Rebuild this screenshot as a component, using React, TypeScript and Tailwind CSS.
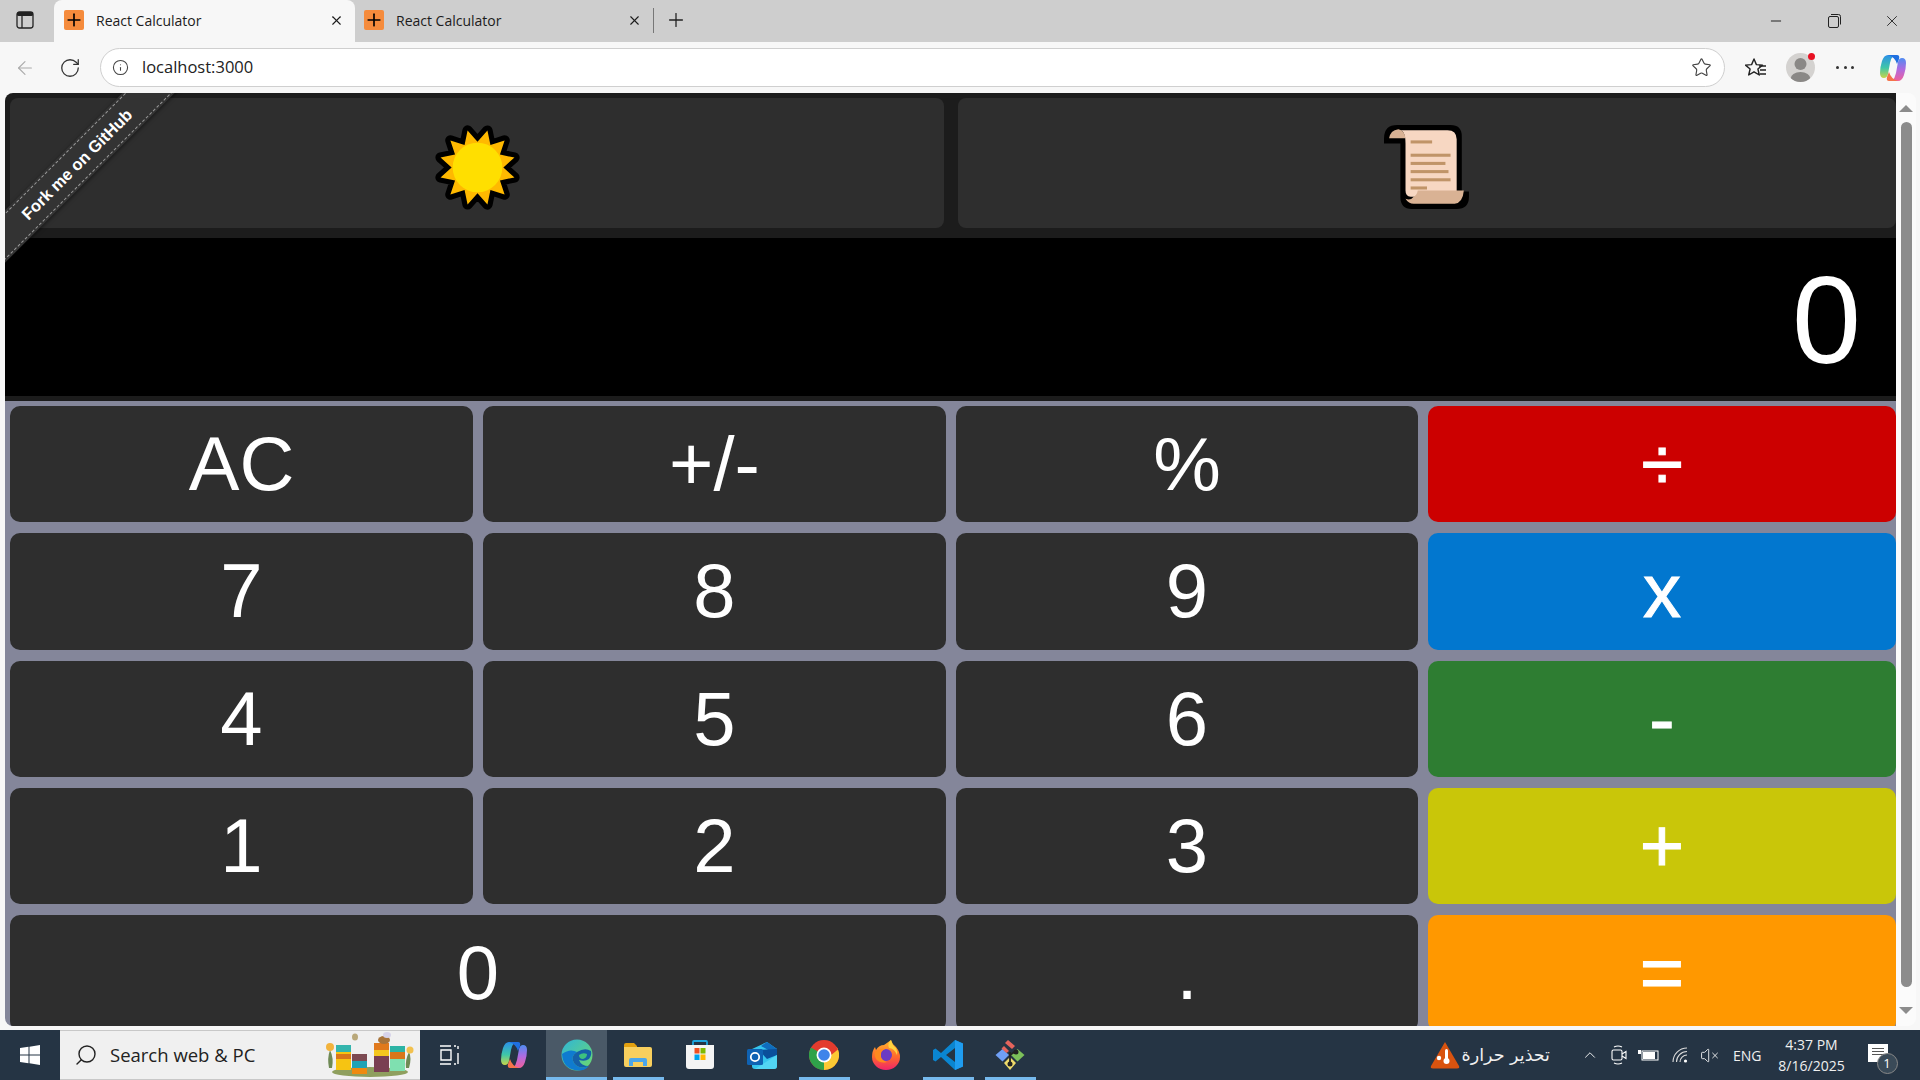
import React from 'react';
import { X, Plus, ArrowLeft, RotateCw, Info, Star, Minus, ChevronUp, VolumeX, Search } from 'lucide-react';

const sunPoints = (() => {
  const pts: string[] = [];
  for (let i = 0; i < 24; i++) {
    const a = ((i * 15 - 75) * Math.PI) / 180;
    const r = i % 2 === 0 ? 37 : 25;
    pts.push(`${(43 + r * Math.cos(a)).toFixed(1)},${(43 + r * Math.sin(a)).toFixed(1)}`);
  }
  return pts.join(' ');
})();

const SunIcon = () => (
  <svg width="89" height="89" viewBox="0 0 86 86">
    <polygon points={sunPoints} fill="#ffb900" stroke="#000" strokeWidth="10" strokeLinejoin="round" />
    <polygon points={sunPoints} fill="#ffb900" />
    <circle cx="43" cy="43" r="24" fill="#ffdf00" />
  </svg>
);

const ScrollIcon = () => (
  <svg width="88" height="88" viewBox="0 0 86 86">
    <path
      d="M14 2 H66 Q77 2 77 13 V67 H84 V72 Q84 84 72 84 H28 Q17 84 17 72 V20 H1 V15 Q1 2 14 2 Z"
      fill="#000"
    />
    <path d="M16 7 H63 Q72 7 72 16 V72 H27 Q22 72 22 66 V20 Q22 7 16 7 Z" fill="#f7d7c2" />
    <path d="M6 15 Q7 7 15 6 Q21 7 22 15 Z" fill="#d9b294" />
    <path d="M30 72 Q33 71 34 66 H79 Q78 78 70 79 H30 Q25 79 22 74 Q27 76 30 72 Z" fill="#d9b294" />
    <rect x="27" y="17" width="21" height="3" fill="#c09468" />
    <rect x="27" y="30" width="39" height="3" fill="#c09468" />
    <rect x="27" y="38" width="34" height="3" fill="#c09468" />
    <rect x="27" y="46" width="37" height="3" fill="#c09468" />
    <rect x="27" y="54" width="39" height="3" fill="#c09468" />
    <rect x="27" y="62" width="16" height="3" fill="#c09468" />
  </svg>
);

const Favicon = () => (
  <div className="w-5 h-5 rounded-[2px] bg-[#f58b3c] flex items-center justify-center shrink-0">
    <Plus className="w-5 h-5 text-black" strokeWidth={2} />
  </div>
);

const Tab = ({ active }: { active?: boolean }) => (
  <div
    className={`h-[42px] flex items-center pl-[10px] pr-[11px] pb-[2px] shrink-0 ${
      active ? 'w-[301px] bg-[#f7f7f7] rounded-t-[8px]' : 'w-[299px] ml-[-1px]'
    }`}
  >
    <Favicon />
    <span className="ml-3 text-[14px] text-[#1c1c1c] flex-1">React Calculator</span>
    <X className="w-[15px] h-[15px] text-[#1c1c1c]" strokeWidth={1.8} />
  </div>
);

const CopilotIcon = ({ size }: { size: number }) => (
  <svg width={size} height={size} viewBox="0 0 28 28">
    <defs>
      <linearGradient id={`cpa${size}`} x1="0" y1="0" x2="0" y2="1">
        <stop offset="0" stopColor="#2b8fe8" />
        <stop offset="0.55" stopColor="#3ec6a8" />
        <stop offset="1" stopColor="#c8d64a" />
      </linearGradient>
      <linearGradient id={`cpb${size}`} x1="0" y1="0" x2="0" y2="1">
        <stop offset="0" stopColor="#4f8cf2" />
        <stop offset="0.5" stopColor="#b06ae0" />
        <stop offset="1" stopColor="#f0609a" />
      </linearGradient>
    </defs>
    <path d="M9 1 H15 Q12 4 11 9 L9 20 Q8 24 5 24 Q1 24 1 19 Q1 13 3 7 Q5 1 9 1 Z" fill={`url(#cpa${size})`} />
    <path d="M19 27 H13 Q16 24 17 19 L19 8 Q20 4 23 4 Q27 4 27 9 Q27 15 25 21 Q23 27 19 27 Z" fill={`url(#cpb${size})`} />
    <path d="M9 1 H18 Q21 1 20 5 L18 10 Q16 3 9 1 Z" fill="#1f6fe0" />
    <path d="M19 27 H10 Q7 27 8 23 L10 18 Q12 25 19 27 Z" fill="#f5734a" />
  </svg>
);

const TitleBar = () => (
  <div className="h-[42px] bg-[#cecece] flex items-center shrink-0">
    <div className="w-[54px] pl-[16px] pb-[2px]">
      <svg width="18" height="18" viewBox="0 0 18 18">
        <rect x="1" y="1" width="16" height="16" rx="2.5" fill="none" stroke="#222" strokeWidth="1.3" />
        <rect x="1" y="1" width="16" height="4" rx="1.5" fill="#222" />
        <line x1="6" y1="5" x2="6" y2="17" stroke="#222" strokeWidth="1.3" />
      </svg>
    </div>
    <Tab active />
    <Tab />
    <div className="w-px h-[25px] bg-[#777] mb-[2px]" />
    <Plus className="w-[22px] h-[22px] ml-[11px] mb-[2px] text-[#222]" strokeWidth={1.4} />
    <div className="flex-1" />
    <Minus className="w-[16px] h-[16px] text-[#222] mr-[44px]" strokeWidth={1.5} />
    <svg width="13" height="14" viewBox="0 0 13 14" className="mr-[42px]">
      <rect x="0.5" y="2.5" width="10" height="11" rx="1.5" fill="none" stroke="#222" />
      <path d="M3 0.5 H10.5 Q12.5 0.5 12.5 2.5 V10.5" fill="none" stroke="#222" />
    </svg>
    <X className="w-[18px] h-[18px] text-[#222] mr-[19px]" strokeWidth={1.2} />
  </div>
);

const Toolbar = () => (
  <div className="h-[51px] bg-[#f7f7f7] flex items-center shrink-0">
    <ArrowLeft className="w-[22px] h-[22px] ml-[14px] text-[#aaa]" strokeWidth={1.2} />
    <RotateCw className="w-[22px] h-[22px] ml-[23px] text-[#333]" strokeWidth={1.4} />
    <div className="ml-[19px] w-[1625px] h-[39px] bg-white border border-[#cfcfcf] rounded-full flex items-center pl-[11px] pr-[12px]">
      <Info className="w-[17px] h-[17px] text-[#444]" strokeWidth={1.5} />
      <span className="ml-[13px] text-[16.5px] text-[#222] flex-1">localhost:3000</span>
      <Star className="w-[21px] h-[21px] text-[#444]" strokeWidth={1.3} />
    </div>
    <svg width="22" height="22" viewBox="0 0 22 22" className="ml-[20px]">
      <path d="M9 2 L11.4 7.6 L17.5 8.1 L12.9 12 L14.3 18 L9 14.8 L3.7 18 L5.1 12 L.5 8.1 L6.6 7.6 Z" fill="none" stroke="#222" strokeWidth="1.4" strokeLinejoin="round" />
      <path d="M14 9 H21 M15 13 H21 M15 17 H21" stroke="#222" strokeWidth="1.3" />
    </svg>
    <div className="relative ml-[19px] w-[29px] h-[29px] rounded-full bg-[#d4d2d0] overflow-visible">
      <svg width="29" height="29" viewBox="0 0 29 29" className="rounded-full">
        <circle cx="14.5" cy="11" r="6" fill="#8a8886" />
        <ellipse cx="14.5" cy="26" rx="10" ry="7" fill="#8a8886" />
      </svg>
      <div className="absolute top-0 right-0 w-[7px] h-[7px] rounded-full bg-[#e81123]" />
    </div>
    <span className="ml-[21px] w-[18px] flex justify-between">
      <i className="w-[3px] h-[3px] rounded-full bg-[#333]" />
      <i className="w-[3px] h-[3px] rounded-full bg-[#333]" />
      <i className="w-[3px] h-[3px] rounded-full bg-[#333]" />
    </span>
    <div className="ml-[25px]">
      <CopilotIcon size={28} />
    </div>
  </div>
);

const Key = ({
  label,
  color = 'bg-[#2e2e2e]',
  span,
  op,
}: {
  label: string;
  color?: string;
  span?: boolean;
  op?: boolean;
}) => (
  <div
    className={`${color} ${span ? 'col-span-2' : ''} ${
      op ? '[-webkit-text-stroke:1px_#fff]' : ''
    } rounded-[10px] flex items-center justify-center text-white text-[76px] leading-none`}
  >
    {label}
  </div>
);

const Calculator = () => (
  <div className="flex-1 min-w-0 flex flex-col font-['Liberation_Sans',Arial,sans-serif]">
    <div className="h-[145px] bg-[#1c1c1c] flex gap-[14px] pl-[5px] pt-[5px] pb-[10px] shrink-0">
      <div className="w-[934px] rounded-[8px] bg-[#2e2e2e] flex items-center justify-center pt-2">
        <SunIcon />
      </div>
      <div className="flex-1 rounded-[8px] bg-[#2e2e2e] flex items-center justify-center pt-2">
        <ScrollIcon />
      </div>
    </div>
    <div className="h-[163px] bg-black border-b-[5px] border-[#1c1c1c] flex items-center justify-end pr-[35px] pt-[6px] shrink-0 text-white text-[124px] leading-none">
      0
    </div>
    <div className="flex-1 bg-[#84869a] pl-[5px] pt-[5px] overflow-hidden">
      <div className="grid grid-cols-[463px_463px_462px_468px] grid-rows-[116.25px_116.25px_116.25px_116.25px_116.25px] gap-x-[10px] gap-y-[11px]">
        <Key label="AC" />
        <Key label="+/-" />
        <Key label="%" />
        <Key label="÷" color="bg-[#cc0000]" op />
        <Key label="7" />
        <Key label="8" />
        <Key label="9" />
        <Key label="x" color="bg-[#0277cf]" op />
        <Key label="4" />
        <Key label="5" />
        <Key label="6" />
        <Key label="-" color="bg-[#2e7d32]" op />
        <Key label="1" />
        <Key label="2" />
        <Key label="3" />
        <Key label="+" color="bg-[#c9c609]" op />
        <Key label="0" span />
        <Key label="." />
        <Key label="=" color="bg-[#ff9800]" op />
      </div>
    </div>
  </div>
);

const Scrollbar = () => (
  <div className="w-[20px] bg-[#fbfbfb] flex flex-col items-center shrink-0 pt-[12px] pb-[12px]">
    <div className="w-0 h-0 border-x-[7px] border-x-transparent border-b-[7px] border-b-[#8c8c8c]" />
    <div className="w-[11px] h-[865px] mt-[10px] rounded-full bg-[#8c8c8c]" />
    <div className="flex-1" />
    <div className="w-0 h-0 border-x-[7px] border-x-transparent border-t-[7px] border-t-[#8c8c8c]" />
  </div>
);

const WindowsLogo = () => (
  <svg width="20" height="20" viewBox="0 0 20 20">
    <path d="M0 3 L8.5 1.8 V9.5 H0 Z M9.5 1.7 L20 0 V9.5 H9.5 Z M0 10.5 H8.5 V18.2 L0 17 Z M9.5 10.5 H20 V20 L9.5 18.3 Z" fill="#fff" />
  </svg>
);

const HiveArt = () => (
  <svg width="92" height="46" viewBox="0 0 92 46">
    <ellipse cx="46" cy="40" rx="38" ry="5" fill="#8f9f5e" />
    <path d="M5 36 Q3 26 6 18 Q10 26 8 36 Z M85 36 Q88 26 85 20 Q81 28 82 36 Z" fill="#6f8a55" />
    <circle cx="6" cy="15" r="4" fill="#f2b33c" />
    <circle cx="86" cy="18" r="3.5" fill="#f2c14e" />
    <rect x="12" y="13" width="15" height="25" fill="#f6c412" />
    <rect x="12" y="13" width="15" height="7" fill="#34b5ad" />
    <rect x="12" y="22" width="15" height="5" fill="#d9761a" />
    <rect x="28" y="22" width="15" height="7" fill="#7c4a52" />
    <rect x="28" y="29" width="15" height="7" fill="#1fa3b5" />
    <rect x="28" y="36" width="15" height="6" fill="#ef8a10" />
    <rect x="50" y="11" width="15" height="7" fill="#e0791c" />
    <rect x="50" y="18" width="15" height="6" fill="#f4c61f" />
    <rect x="50" y="24" width="15" height="16" fill="#7a3f52" />
    <rect x="66" y="14" width="15" height="6" fill="#2cb3a4" />
    <rect x="66" y="20" width="15" height="7" fill="#d9761a" />
    <rect x="66" y="27" width="15" height="12" fill="#7fe0b0" />
    <ellipse cx="60" cy="8" rx="6" ry="4" fill="#a8743a" />
    <ellipse cx="63" cy="3" rx="4" ry="3" fill="#d7d3ea" />
    <ellipse cx="31" cy="5" rx="3" ry="3.5" fill="#b9a87a" />
  </svg>
);

const EdgeIcon = () => (
  <svg width="32" height="32" viewBox="0 0 32 32">
    <defs>
      <linearGradient id="edgeTop" x1="0" y1="0" x2="1" y2="1">
        <stop offset="0" stopColor="#2fb5d8" />
        <stop offset="1" stopColor="#6fdb6a" />
      </linearGradient>
    </defs>
    <circle cx="16" cy="16" r="15.5" fill="url(#edgeTop)" />
    <path d="M1 15 Q2 31 18 31.5 Q24 31.5 28 27 Q18 31 13 24 Q9 17 16 13 Q9 9 1 15 Z" fill="#0f7bd0" />
    <path d="M16 13 Q9 17 13 24 Q18 31 28 27 Q20 27 18 21 Q24 23 28 20 Q31 16 30 12 Q24 8 16 13 Z" fill="#1560a8" />
    <path d="M18 16 Q22 13 26 15 Q26 19 22 20 Q18 20 18 16 Z" fill="#3dc27f" />
  </svg>
);

const FolderIcon = () => (
  <svg width="28" height="24" viewBox="0 0 28 24">
    <path d="M0 2 Q0 0 2 0 H10 L13 3 H13 V6 H0 Z" fill="#e3a00f" />
    <path d="M0 4 H26 Q28 4 28 6 V22 Q28 24 26 24 H2 Q0 24 0 22 Z" fill="#f8cf5e" />
    <path d="M5 23 V17 Q5 15 7 15 H21 Q23 15 23 17 V23 H19 V19 H9 V23 Z" fill="#4ba6ea" />
  </svg>
);

const StoreIcon = () => (
  <svg width="30" height="30" viewBox="0 0 30 30">
    <path d="M8 6 V2 Q8 1 9 1 H21 Q22 1 22 2 V6" fill="none" stroke="#1ea6df" strokeWidth="1.8" />
    <path d="M1 5 H29 V26 Q29 29 26 29 H4 Q1 29 1 26 Z" fill="#f4f4f4" />
    <rect x="9.5" y="8" width="5" height="5.5" fill="#f25022" />
    <rect x="15.5" y="8" width="5" height="5.5" fill="#7fba00" />
    <rect x="9.5" y="14.5" width="5" height="5.5" fill="#00a4ef" />
    <rect x="15.5" y="14.5" width="5" height="5.5" fill="#ffb900" />
  </svg>
);

const OutlookIcon = () => (
  <svg width="30" height="27" viewBox="0 0 30 27">
    <path d="M5 7 L20 0 L30 7 V24 Q30 27 27 27 H8 Q5 27 5 24 Z" fill="#35c5ee" />
    <path d="M14 4 L20 0 L30 7 V13 Z" fill="#0f6cbd" />
    <path d="M12 8 L30 7 V13 L20 17 Z" fill="#0a4f9b" />
    <path d="M8 27 L30 13 V24 Q30 27 27 27 Z" fill="#5fdcf7" opacity="0.7" />
    <rect x="0" y="7" width="16" height="16" rx="1.5" fill="#0f62b3" />
    <circle cx="8" cy="15" r="4.2" fill="none" stroke="#fff" strokeWidth="1.8" />
  </svg>
);

const ChromeIcon = () => (
  <svg width="30" height="30" viewBox="0 0 30 30">
    <circle cx="15" cy="15" r="15" fill="#e33b2e" />
    <path d="M15 15 L2 7.5 A15 15 0 0 0 15 30 Z" fill="#2fa24a" />
    <path d="M15 15 L15 30 A15 15 0 0 0 28 7.5 Z" fill="#fcc934" />
    <path d="M15 7.5 H28 A15 15 0 0 1 28.9 9.5 L21 16 Z" fill="#e33b2e" />
    <circle cx="15" cy="15" r="7.5" fill="#fff" />
    <circle cx="15" cy="15" r="5.8" fill="#3f84ea" />
  </svg>
);

const FirefoxIcon = () => (
  <svg width="28" height="30" viewBox="0 0 28 30">
    <defs>
      <linearGradient id="foxBody" x1="0.5" y1="0" x2="0.5" y2="1">
        <stop offset="0" stopColor="#ffb62e" />
        <stop offset="0.55" stopColor="#ff6a2b" />
        <stop offset="1" stopColor="#f0246b" />
      </linearGradient>
    </defs>
    <path d="M19 0 Q20 4 24 7 Q28 12 28 17 A14 13 0 0 1 0 17 Q0 11 3 7 L4 10 Q7 5 12 5 Q15 3 19 0 Z" fill="url(#foxBody)" />
    <circle cx="14" cy="15" r="6" fill="#6c3bc2" />
    <path d="M3 12 Q8 8 13 9 Q9 11 9 14 Q8 20 15 22 Q8 24 4 19 Q2 16 3 12 Z" fill="#ff8a1e" />
    <path d="M19 0 Q20 5 24 8 Q26 12 25 15 Q22 8 17 8 Q15 4 19 0 Z" fill="#ffd23f" />
  </svg>
);

const VsCodeIcon = () => (
  <svg width="30" height="30" viewBox="0 0 30 30">
    <path d="M22 0 L30 3.5 V26.5 L22 30 L8 17 L2.5 21.5 L0 20 V10 L2.5 8.5 L8 13 Z M22 8 L13 15 L22 22 Z" fill="#0a85d1" />
    <path d="M22 0 L30 3.5 V26.5 L22 30 Z" fill="#1f9cf0" />
  </svg>
);

const GitIcon = () => (
  <svg width="30" height="30" viewBox="0 0 30 30">
    <path d="M7.5 9 L14 15 L7.5 21.5 L0.5 15 Z" fill="#6f9ff5" />
    <path d="M22.5 9 L29.5 15 L22.5 21.5 L16 15 Z" fill="#7cc05a" />
    <path d="M15 17 L21 23 L15 30 L9 23 Z" fill="#f0dc6b" />
    <path d="M13 0 L20 6 L17 9 L10 3 Z" fill="#e5645c" />
    <path d="M9 6 L14 11 L11.5 13 L6.5 8.5 Z" fill="#e5645c" />
    <path d="M15 12 V24 M15 15 L21 11" stroke="#222" strokeWidth="1.8" />
    <circle cx="21" cy="12" r="2.5" fill="#222" />
    <circle cx="15" cy="24" r="2.5" fill="#222" />
  </svg>
);

const Slot = ({
  children,
  active,
  underline,
}: {
  children: React.ReactNode;
  active?: boolean;
  underline?: boolean;
}) => (
  <div className={`h-[50px] relative flex items-center justify-center shrink-0 ${active ? 'w-[61px] bg-[#4a5967]' : 'w-[62px]'}`}>
    {children}
    {underline && (
      <div className={`absolute bottom-0 h-[3px] bg-[#76b9ed] ${active ? 'left-0 right-0' : 'left-[6px] right-[5px]'}`} />
    )}
  </div>
);

const Taskbar = () => (
  <div className="h-[50px] bg-[#253444] flex items-center shrink-0 text-white font-['Open_Sans','DejaVu_Sans',sans-serif]">
    <div className="w-[60px] flex justify-center">
      <WindowsLogo />
    </div>
    <div className="w-[360px] h-[50px] bg-[#f0f0f0] border-y border-[#c8c8c8] flex items-center pl-[14px] pr-[4px] text-[#222]">
      <Search className="w-[24px] h-[24px] -scale-x-100" strokeWidth={1.4} />
      <span className="ml-[12px] text-[18.5px] flex-1 whitespace-nowrap">Search web &amp; PC</span>
      <HiveArt />
    </div>
    <div className="w-[20px] ml-[20px] mr-[40px] flex justify-center">
      <svg width="20" height="20" viewBox="0 0 20 20">
        <path d="M0 1 H11 M0 19 H11 M14 1 H16 M14 19 H16 M1 5 H11 V15 H1 Z M18 1 V4 M18 8 V19" stroke="#fff" strokeWidth="1.4" fill="none" />
      </svg>
    </div>
    <div className="w-[28px] mr-[18px]">
      <CopilotIcon size={28} />
    </div>
    <Slot active underline>
      <EdgeIcon />
    </Slot>
    <Slot underline>
      <FolderIcon />
    </Slot>
    <Slot>
      <StoreIcon />
    </Slot>
    <Slot>
      <OutlookIcon />
    </Slot>
    <Slot underline>
      <ChromeIcon />
    </Slot>
    <Slot>
      <FirefoxIcon />
    </Slot>
    <Slot underline>
      <VsCodeIcon />
    </Slot>
    <Slot underline>
      <GitIcon />
    </Slot>
    <div className="w-[389px] shrink-0" />
    <svg width="30" height="28" viewBox="0 0 30 28" className="shrink-0">
      <path d="M15 1 L29 25 Q30 27.5 27 27.5 H3 Q0 27.5 1 25 Z" fill="#d9530f" />
      <rect x="15" y="8" width="3" height="12" rx="1.5" fill="#fff" />
      <circle cx="16.5" cy="20" r="3" fill="#fff" />
      <circle cx="9" cy="17" r="2.2" fill="#fff" />
    </svg>
    <span dir="rtl" className="w-[79px] ml-[11px] text-[17.5px] whitespace-nowrap text-[#f0f0f0] font-['DejaVu_Sans',sans-serif]">
      تحذير حرارة
    </span>
    <ChevronUp className="w-[18px] h-[18px] ml-[31px]" strokeWidth={1.2} />
    <svg width="16" height="20" viewBox="0 0 16 20" className="ml-[12px]">
      <rect x="1" y="5" width="10" height="10" rx="1.5" fill="none" stroke="#fff" strokeWidth="1.1" />
      <path d="M11 9 L15 6.5 V13.5 L11 11 M3 2 Q7 0 11 2 M3 18 Q7 20 11 18" fill="none" stroke="#fff" strokeWidth="1.1" />
    </svg>
    <svg width="21" height="12" viewBox="0 0 21 12" className="ml-[11px]">
      <rect x="4" y="2" width="16" height="9" fill="none" stroke="#fff" />
      <rect x="5" y="3" width="12" height="7" fill="#fff" />
      <path d="M0 1 H3 V5 H0 Z" fill="#fff" />
    </svg>
    <svg width="16" height="16" viewBox="0 0 16 16" className="ml-[13px]">
      <path d="M1 15 A14 14 0 0 1 15 1 M4.5 15 A10.5 10.5 0 0 1 15 4.5 M8 15 A7 7 0 0 1 15 8" fill="none" stroke="#ddd" strokeWidth="1.1" />
      <circle cx="13.5" cy="14" r="1.6" fill="#fff" />
    </svg>
    <VolumeX className="w-[19px] h-[19px] ml-[12px]" strokeWidth={1.1} />
    <span className="ml-[14px] text-[14px] text-[#f0f0f0]">ENG</span>
    <div className="w-[84px] ml-[8px] flex flex-col items-center text-[14px] leading-[21px] text-[#f0f0f0]">
      <span>4:37 PM</span>
      <span>8/16/2025</span>
    </div>
    <div className="relative ml-[14px] w-[20px] h-[18px] bg-white mb-[4px]">
      <div className="mx-[4px] mt-[4px] h-[1px] bg-[#555]" />
      <div className="mx-[4px] mt-[2px] h-[1px] bg-[#555]" />
      <div className="mx-[4px] mt-[2px] h-[1px] bg-[#555]" />
      <div className="absolute left-[9px] top-[9px] w-[21px] h-[21px] rounded-full bg-[#3a4a58] border border-[#888] flex items-center justify-center text-[13px] text-white">
        1
      </div>
    </div>
  </div>
);

export default function App() {
  return (
    <div className="w-[1920px] h-[1080px] overflow-hidden flex flex-col bg-[#f7f7f7] font-['Open_Sans',sans-serif]">
      <TitleBar />
      <Toolbar />
      <div className="h-[937px] pl-[5px] pr-[4px] pb-[4px] shrink-0">
        <div className="relative h-full flex rounded-[8px] overflow-hidden">
          <Calculator />
          <Scrollbar />
          <div className="absolute left-[-78px] top-[53px] w-[300px] h-[37px] -rotate-45 bg-[#333] flex items-center py-[2px] shadow-[0_1px_4px_rgba(0,0,0,0.5)]">
            <div className="w-full h-full border-y border-dashed border-white/50 flex items-center justify-center text-white font-bold text-[16.5px] font-['Liberation_Sans',Arial,sans-serif]">
              Fork me on GitHub
            </div>
          </div>
        </div>
      </div>
      <Taskbar />
    </div>
  );
}
